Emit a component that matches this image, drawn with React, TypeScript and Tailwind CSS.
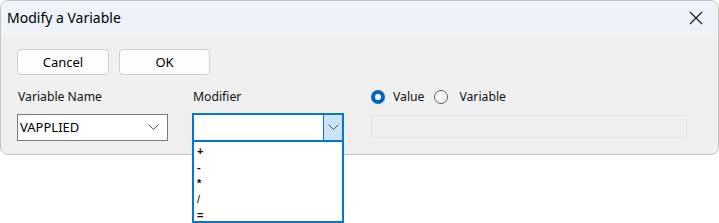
import React from "react";

export default function App() {
  const font = { fontFamily: '"Noto Sans", "Open Sans", sans-serif' };
  return (
    <div className="w-[719px] h-[223px] bg-white relative" style={font}>
      <div className="w-[719px] h-[155px] border border-[#c4c4c4] rounded-[8px] bg-[#f0f0f0] overflow-hidden flex flex-col">
        <div className="h-[33px] bg-[#eef2f9] flex items-center justify-between pl-[6px] pr-[14px]">
          <span className="text-[14px] text-black leading-none">Modify a Variable</span>
          <svg width="14" height="14" viewBox="0 0 14 14" className="mr-[1px]">
            <path d="M1 1 L13 13 M13 1 L1 13" stroke="#111" strokeWidth="1.1" />
          </svg>
        </div>
        <div className="pl-[16px] pt-[15px]">
          <div className="flex gap-[10px]">
            <button className="w-[92px] h-[26px] bg-[#fdfdfd] border border-[#d0d0d0] rounded-[4px] text-[13px] text-black leading-none">Cancel</button>
            <button className="w-[91px] h-[26px] bg-[#fdfdfd] border border-[#d0d0d0] rounded-[4px] text-[13px] text-black leading-none">OK</button>
          </div>
          <div className="flex mt-[8px]">
            <div className="w-[175px] flex flex-col">
              <div className="h-[28px] flex items-center text-[12.2px] text-[#111] pl-[1px]">Variable Name</div>
              <div className="mt-[3px] w-[151px] h-[27px] bg-white border border-[#7a7a7a] flex items-center justify-between pl-[2px] pr-[8px]">
                <span className="text-[13px] text-black">VAPPLIED</span>
                <svg width="11" height="7" viewBox="0 0 11 7"><path d="M0.5 0.5 L5.5 5.5 L10.5 0.5" stroke="#555" fill="none" strokeWidth="1" /></svg>
              </div>
            </div>
            <div className="w-[179px] flex flex-col">
              <div className="h-[28px] flex items-center text-[12.2px] text-[#111] pl-[1px]">Modifier</div>
              <div className="mt-[2px] w-[152px] h-[29px] bg-white border-2 border-[#0078d7] flex">
                <div className="flex-1" />
                <div className="w-[19px] bg-[#cce4f7] border-l border-[#0078d7] flex items-center justify-center">
                  <svg width="11" height="7" viewBox="0 0 11 7"><path d="M0.5 0.5 L5.5 5.5 L10.5 0.5" stroke="#555" fill="none" strokeWidth="1" /></svg>
                </div>
              </div>
            </div>
            <div className="flex flex-col">
              <div className="h-[28px] flex items-center text-[12.2px] text-[#111]">
                <span className="w-[14px] h-[14px] rounded-full bg-[#0067c0] flex items-center justify-center">
                  <span className="w-[6px] h-[6px] rounded-full bg-white" />
                </span>
                <span className="ml-[8px]">Value</span>
                <span className="ml-[10px] w-[14px] h-[14px] rounded-full border border-[#5f5f5f] bg-[#f6f6f6]" />
                <span className="ml-[11px]">Variable</span>
              </div>
              <div className="mt-[4px] w-[316px] h-[23px] border border-[#e6e6e6] bg-[#f0f0f0]" />
            </div>
          </div>
        </div>
      </div>
      <div className="absolute left-[192px] top-[140px] w-[152px] h-[83px] bg-white border-2 border-[#0078d7] pt-[1px] pl-[3px]" style={{ fontFamily: '"Liberation Sans", sans-serif' }}>
        {["+", "-", "*", "/", "="].map((s) => (
          <div key={s} className={"h-[16px] flex items-center text-[11px] text-black leading-none " + (s === "/" ? "font-normal" : "font-semibold")}>{s}</div>
        ))}
      </div>
    </div>
  );
}
